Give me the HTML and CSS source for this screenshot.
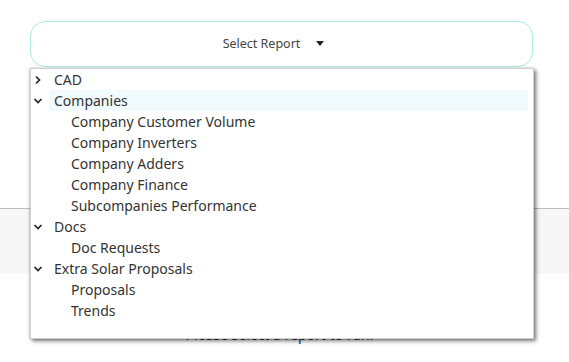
FILE: index.html
```html
<!DOCTYPE html>
<html>
<head>
  <meta charset="UTF-8">
  <title>Reports</title>
  <link rel="stylesheet" href="styles.css">
</head>
<body>
  <div class="page">
    <div class="header">
      <button class="select-button">
        <span class="select-label">Select Report</span>
        <span class="caret"></span>
      </button>
    </div>
    <div class="toolbar"></div>
    <div class="content">
      <p class="empty-text">Please select a report to run.</p>
    </div>

    <!-- ドロップダウン (開いた状態) -->
    <div class="dropdown">
      <div class="row group">
        <span class="toggle">
          <svg width="10" height="10" viewBox="0 0 10 10"><polyline points="3,1.5 6.5,5 3,8.5" fill="none" stroke="#222" stroke-width="1.7"/></svg>
        </span>
        <span class="label">CAD</span>
      </div>
      <div class="row group">
        <span class="toggle">
          <svg width="10" height="10" viewBox="0 0 10 10"><polyline points="1.5,3 5,6.5 8.5,3" fill="none" stroke="#222" stroke-width="1.7"/></svg>
        </span>
        <span class="label active">Companies</span>
      </div>
      <div class="row child"><span class="label">Company Customer Volume</span></div>
      <div class="row child"><span class="label">Company Inverters</span></div>
      <div class="row child"><span class="label">Company Adders</span></div>
      <div class="row child"><span class="label">Company Finance</span></div>
      <div class="row child"><span class="label">Subcompanies Performance</span></div>
      <div class="row group">
        <span class="toggle">
          <svg width="10" height="10" viewBox="0 0 10 10"><polyline points="1.5,3 5,6.5 8.5,3" fill="none" stroke="#222" stroke-width="1.7"/></svg>
        </span>
        <span class="label">Docs</span>
      </div>
      <div class="row child"><span class="label">Doc Requests</span></div>
      <div class="row group">
        <span class="toggle">
          <svg width="10" height="10" viewBox="0 0 10 10"><polyline points="1.5,3 5,6.5 8.5,3" fill="none" stroke="#222" stroke-width="1.7"/></svg>
        </span>
        <span class="label">Extra Solar Proposals</span>
      </div>
      <div class="row child"><span class="label">Proposals</span></div>
      <div class="row child"><span class="label">Trends</span></div>
    </div>
  </div>
</body>
</html>
```

FILE: styles.css
```css
body {
  margin: 0;
  font-family: 'Noto Sans', 'Open Sans', sans-serif;
  color: #333333;
  background-color: #FFFFFF;
}

.page {
  position: relative;
  width: 569px;
  height: 362px;
  overflow: hidden;
}

.header {
  height: 208px;
  padding: 21px 36px 0 30px;
  box-sizing: border-box;
}

.select-button {
  display: flex;
  align-items: center;
  justify-content: center;
  gap: 16px;
  width: 100%;
  height: 46px;
  padding: 0 16px 0 0;
  background-color: #FFFFFF;
  border: 1px solid #A9ECE6;
  border-radius: 15px;
  font-family: inherit;
  font-size: 12.5px;
  color: #444444;
  cursor: pointer;
}

.select-label {
  line-height: 16px;
}

.caret {
  width: 0;
  height: 0;
  border-left: 4.5px solid transparent;
  border-right: 4.5px solid transparent;
  border-top: 5px solid #222222;
  margin-top: -2px;
}

.toolbar {
  height: 65px;
  border-top: 1px solid #BDBDBD;
  background-color: #F7F7F7;
}

.content {
  padding-top: 51px;
}

.empty-text {
  margin: 0;
  text-align: center;
  font-size: 14px;
  line-height: 20px;
  color: #333333;
  padding-right: 10px;
}

.dropdown {
  position: absolute;
  top: 68px;
  left: 30px;
  width: 504px;
  box-sizing: border-box;
  padding-bottom: 17px;
  background-color: #FFFFFF;
  border: 1px solid #D0D0D0;
  box-shadow: 2px 2px 4px rgba(0, 0, 0, 0.55), -1px 0 2px rgba(0, 0, 0, 0.15);
}

.row {
  display: flex;
  align-items: center;
  height: 21px;
  font-size: 14px;
  cursor: pointer;
}

.toggle {
  display: flex;
  align-items: center;
  width: 18px;
  height: 21px;
  padding-left: 2px;
  box-sizing: border-box;
}

.label {
  flex: 1;
  height: 21px;
  line-height: 21px;
  padding-left: 5px;
  margin-right: 5px;
  white-space: nowrap;
}

.label.active {
  background-color: #F1FAFC;
}

.child {
  padding-left: 35px;
}
```
